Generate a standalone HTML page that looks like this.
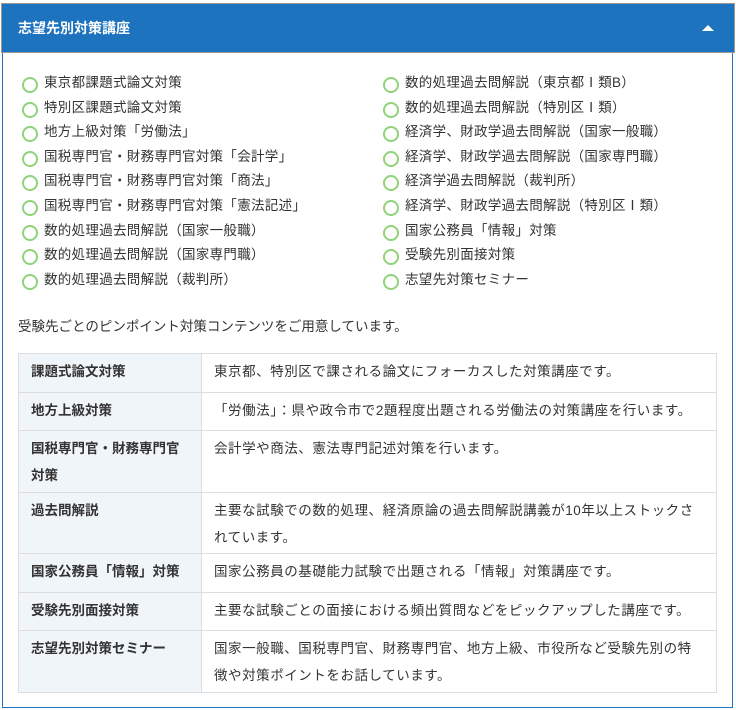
<!DOCTYPE html>
<html><head><meta charset="utf-8"><style>
*{margin:0;padding:0;box-sizing:border-box}
body{width:736px;height:710px;background:#fff;font-family:"Liberation Sans","Noto Sans CJK JP",sans-serif;color:#333;position:relative;overflow:hidden}
.hd{position:absolute;left:1px;top:3px;width:734px;height:50px;background:#1e73be;border:1px solid #999;color:#fff;font-weight:bold;font-size:14px;line-height:48px;padding-left:16px}
.tri{position:absolute;right:20px;top:21px;width:0;height:0;border-left:6px solid transparent;border-right:6px solid transparent;border-bottom:6px solid #fff}
.bd{position:absolute;left:2px;top:53px;width:731px;height:655px;border:1px solid #1e73be;border-top:none}
.col{position:absolute;top:72px;list-style:none;font-size:13.5px}
.col li{height:24.6px;line-height:21px;position:relative;padding-left:22px;letter-spacing:.3px}
.col li:before{content:"";position:absolute;left:0;top:5px;width:12px;height:12px;border:2px solid #8fd37a;border-radius:50%}
p{position:absolute;left:18px;top:315px;font-size:13.5px}
table{position:absolute;left:18px;top:353px;width:699px;border-collapse:collapse;font-size:13.5px;table-layout:fixed}
td{border:1px solid #ddd;padding:4px 12px 0;line-height:27px;vertical-align:top;letter-spacing:.55px}
td:first-child{width:183px;background:#f0f5fa;font-weight:bold;letter-spacing:0}
</style></head><body>
<div class="hd">志望先別対策講座<div class="tri"></div></div>
<div class="bd"></div>
<ul class="col" style="left:22px">
<li>東京都課題式論文対策</li><li>特別区課題式論文対策</li><li>地方上級対策「労働法」</li><li>国税専門官・財務専門官対策「会計学」</li><li>国税専門官・財務専門官対策「商法」</li><li>国税専門官・財務専門官対策「憲法記述」</li><li>数的処理過去問解説（国家一般職）</li><li>数的処理過去問解説（国家専門職）</li><li>数的処理過去問解説（裁判所）</li>
</ul>
<ul class="col" style="left:383px">
<li>数的処理過去問解説（東京都Ⅰ類B）</li><li>数的処理過去問解説（特別区Ⅰ類）</li><li>経済学、財政学過去問解説（国家一般職）</li><li>経済学、財政学過去問解説（国家専門職）</li><li>経済学過去問解説（裁判所）</li><li>経済学、財政学過去問解説（特別区Ⅰ類）</li><li>国家公務員「情報」対策</li><li>受験先別面接対策</li><li>志望先対策セミナー</li>
</ul>
<p>受験先ごとのピンポイント対策コンテンツをご用意しています。</p>
<table>
<tr style="height:39px"><td>課題式論文対策</td><td>東京都、特別区で課される論文にフォーカスした対策講座です。</td></tr>
<tr style="height:38px"><td>地方上級対策</td><td>「労働法」：県や政令市で2題程度出題される労働法の対策講座を行います。</td></tr>
<tr style="height:62px"><td>国税専門官・財務専門官対策</td><td>会計学や商法、憲法専門記述対策を行います。</td></tr>
<tr style="height:61px"><td>過去問解説</td><td>主要な試験での数的処理、経済原論の過去問解説講義が10年以上ストックされています。</td></tr>
<tr style="height:39px"><td>国家公務員「情報」対策</td><td>国家公務員の基礎能力試験で出題される「情報」対策講座です。</td></tr>
<tr style="height:38px"><td>受験先別面接対策</td><td>主要な試験ごとの面接における頻出質問などをピックアップした講座です。</td></tr>
<tr style="height:62px"><td>志望先別対策セミナー</td><td>国家一般職、国税専門官、財務専門官、地方上級、市役所など受験先別の特徴や対策ポイントをお話しています。</td></tr>
</table>
</body></html>
